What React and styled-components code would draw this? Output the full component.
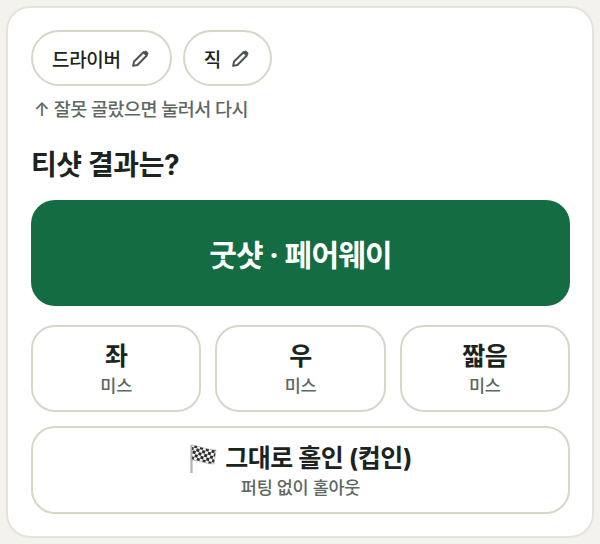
import React from "react";
import styled, { createGlobalStyle } from "styled-components";

const GlobalStyle = createGlobalStyle`
  html, body {
    margin: 0;
    padding: 0;
    background: #f4f2ec;
  }
  * {
    box-sizing: border-box;
  }
`;

const Page = styled.div`
  width: 600px;
  height: 544px;
  padding: 6px;
  font-family: "Inter", "Noto Sans CJK KR", "Noto Sans", sans-serif;
  color: #1c2420;
`;

const Card = styled.div`
  height: 532px;
  padding: 22px 22px 0 23px;
  background: #fff;
  border: 2px solid #e6e3db;
  border-radius: 24px;
`;

const ChipRow = styled.div`
  display: flex;
  gap: 11px;
`;

const Chip = styled.button`
  display: flex;
  align-items: center;
  gap: 10px;
  height: 56px;
  padding: 0 20px 0 19px;
  background: #fff;
  border: 2.5px solid #d8d5ca;
  border-radius: 28px;
  font-family: inherit;
  font-size: 19px;
  font-weight: 500;
  letter-spacing: -0.3px;
  color: #1c2420;
`;

const Hint = styled.p`
  margin: 10px 0 0 3px;
  font-size: 18.5px;
  line-height: 27px;
  font-weight: 500;
  letter-spacing: -0.55px;
  color: #5d6862;
`;

const Title = styled.h2`
  margin: 24px 0 0 0;
  font-size: 28px;
  line-height: 36px;
  font-weight: 700;
  letter-spacing: -0.4px;
`;

const PrimaryButton = styled.button`
  display: block;
  width: 100%;
  height: 106px;
  margin-top: 17px;
  background: #146c43;
  border: none;
  border-radius: 24px;
  font-family: inherit;
  font-size: 30px;
  font-weight: 700;
  letter-spacing: -0.8px;
  color: #fff;
`;

const MissRow = styled.div`
  display: grid;
  grid-template-columns: repeat(3, 1fr);
  gap: 14px;
  margin-top: 19px;
`;

const OptionButton = styled.button`
  display: flex;
  flex-direction: column;
  align-items: center;
  justify-content: center;
  width: 100%;
  height: ${(props) => (props.wide ? "88px" : "87px")};
  margin-top: ${(props) => (props.wide ? "14px" : "0")};
  padding: 1px 0 0 0;
  background: #fff;
  border: 2.5px solid #d8d5ca;
  border-radius: 24px;
  font-family: inherit;
  color: #1c2420;
`;

const OptionLabel = styled.span`
  display: flex;
  align-items: center;
  gap: 8px;
  font-size: 25px;
  line-height: 32px;
  font-weight: 700;
  letter-spacing: -0.45px;
`;

const OptionSub = styled.span`
  margin-top: 2px;
  font-size: 17.5px;
  line-height: 24px;
  font-weight: 500;
  letter-spacing: -0.3px;
  color: #5d6862;
`;

const PencilIcon = () => (
  <svg width="19" height="19" viewBox="0 0 18 18" fill="none">
    <path
      d="M2 16l.9-4.1L11.8 3l3.2 3.2-8.9 8.9L2 16z"
      stroke="#4d5551"
      strokeWidth="1.9"
      strokeLinejoin="round"
    />
    <path d="M13 1.8a1.2 1.2 0 0 1 1.7 0l1.5 1.5a1.2 1.2 0 0 1 0 1.7L15 6.2 11.8 3 13 1.8z" fill="#4d5551" />
  </svg>
);

const FlagIcon = () => (
  <svg width="28" height="30" viewBox="0 0 28 30">
    <defs>
      <pattern id="check" width="6" height="6" patternUnits="userSpaceOnUse" patternTransform="rotate(16)">
        <rect width="6" height="6" fill="#f4f4f4" />
        <rect width="3" height="3" fill="#2c2c2c" />
        <rect x="3" y="3" width="3" height="3" fill="#2c2c2c" />
      </pattern>
    </defs>
    <path d="M2.5 2v28" stroke="#b4b4b4" strokeWidth="2.2" />
    <path d="M3 2c7 1 12 4 24 5l-2 14c-9 0-14-4-22-4V2z" fill="url(#check)" stroke="#999" strokeWidth="0.5" />
  </svg>
);

const App = () => {
  return (
    <Page>
      <GlobalStyle />
      <Card>
        <ChipRow>
          <Chip>
            드라이버
            <PencilIcon />
          </Chip>
          <Chip>
            직
            <PencilIcon />
          </Chip>
        </ChipRow>
        <Hint>↑ 잘못 골랐으면 눌러서 다시</Hint>
        <Title>티샷 결과는?</Title>
        <PrimaryButton>굿샷 · 페어웨이</PrimaryButton>
        <MissRow>
          <OptionButton>
            <OptionLabel>좌</OptionLabel>
            <OptionSub>미스</OptionSub>
          </OptionButton>
          <OptionButton>
            <OptionLabel>우</OptionLabel>
            <OptionSub>미스</OptionSub>
          </OptionButton>
          <OptionButton>
            <OptionLabel>짧음</OptionLabel>
            <OptionSub>미스</OptionSub>
          </OptionButton>
        </MissRow>
        <OptionButton wide>
          <OptionLabel>
            <FlagIcon />
            그대로 홀인 (컵인)
          </OptionLabel>
          <OptionSub>퍼팅 없이 홀아웃</OptionSub>
        </OptionButton>
      </Card>
    </Page>
  );
};

export default App;
